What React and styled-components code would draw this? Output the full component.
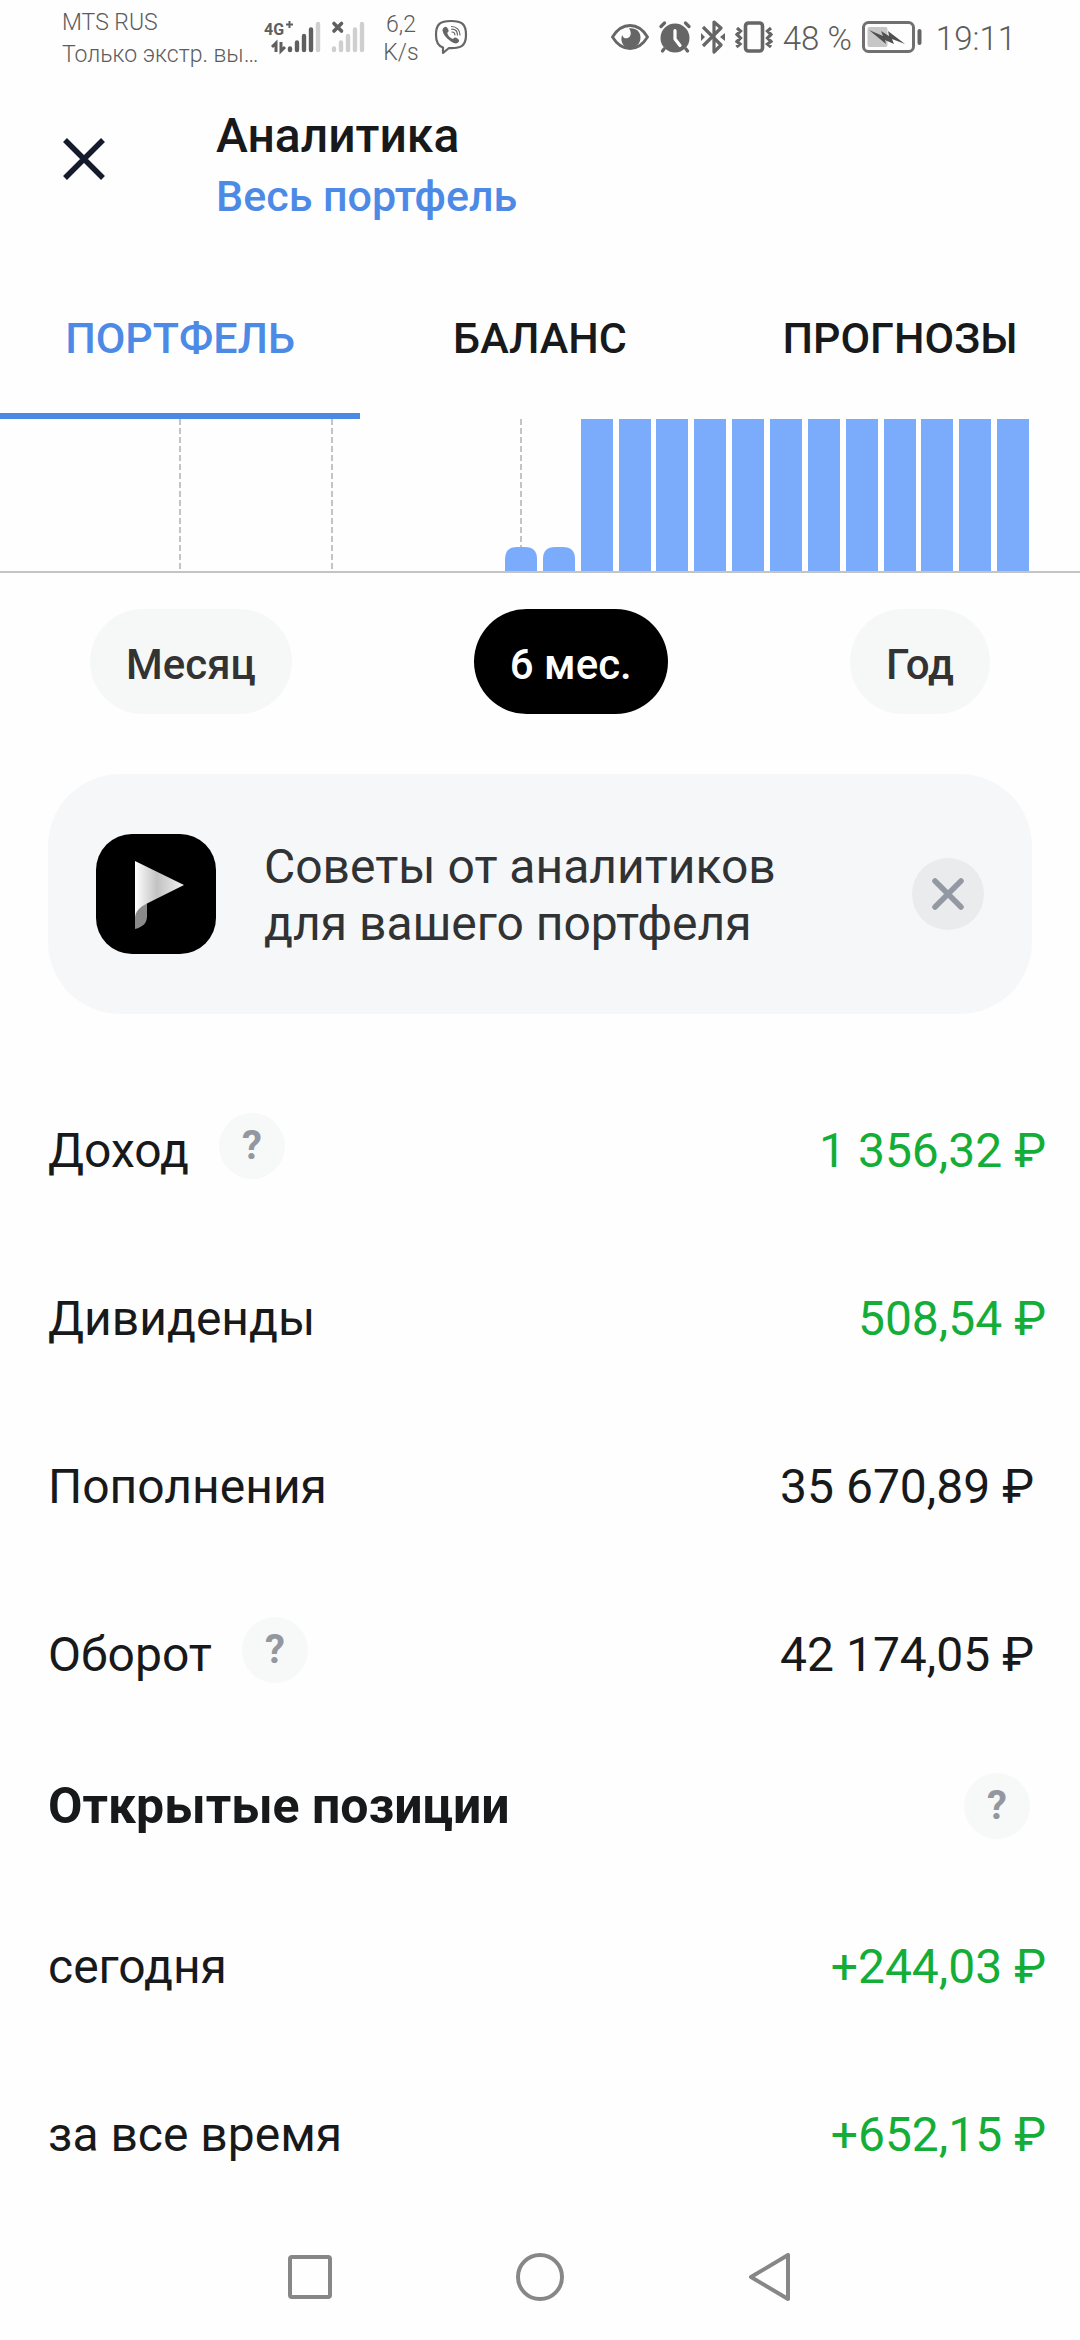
import React, { useState } from 'react'
import styled, { createGlobalStyle } from 'styled-components'

const tabs = ["ПОРТФЕЛЬ", "БАЛАНС", "ПРОГНОЗЫ"]
const periods = ["Месяц", "6 мес.", "Год"]
const totals = [
    { label: "Доход", value: "1 356,32 ₽", profit: true, help: true },
    { label: "Дивиденды", value: "508,54 ₽", profit: true },
    { label: "Пополнения", value: "35 670,89 ₽" },
    { label: "Оборот", value: "42 174,05 ₽", help: true },
]
const positions = [
    { label: "сегодня", value: "+244,03 ₽", profit: true },
    { label: "за все время", value: "+652,15 ₽", profit: true },
]
const bars = [24, 24, 152, 152, 152, 152, 152, 152, 152, 152, 152, 152, 152, 152]
const gridLines = [180, 332, 521]

const SignalIcons = () => (
    <svg width="106" height="38" viewBox="262 18 106 38" aria-hidden="true">
        <text x="264" y="35" fill="#5f5f5f" fontFamily="Roboto, sans-serif" fontWeight="700" fontSize="16">4G</text>
        <path d="M289.500 21v7M286 24.500h7" stroke="#5f5f5f" strokeWidth="2" />
        <path d="M276 52V43l-4 4M281 42v9l4-4" fill="none" stroke="#5f5f5f" strokeWidth="3" />
        <g stroke="#5f5f5f" strokeWidth="4.4" strokeLinecap="round">
            <path d="M290 48.5v1.5M297 42.5v7.5M304 36v14M311 29.5v20.5" />
            <path d="M318 24v26M334 48.5v1.5M341 42.5v7.5M348 36v14M355 29.5v20.5M362 24v26" stroke="#cfcfcf" />
        </g>
        <path d="M334 23.5l7.5 7.5M341.5 23.5l-7.5 7.5" stroke="#5f5f5f" strokeWidth="3.6" strokeLinecap="round" />
    </svg>
)

const ViberIcon = () => (
    <svg width="34" height="36" viewBox="0 0 34 36" aria-hidden="true">
        <path d="M17 2C6 2 2 5 2 16c0 7 2 11 7 12.5V34l6-5c12 .5 17-2 17-13C32 5 28 2 17 2z" fill="none" stroke="#666" strokeWidth="2.2" strokeLinejoin="round" />
        <path d="M9.500 9c2-2 3-1.500 4.500 1 1.200 2 .6 2.700-.8 4 .8 3 2.800 5 5.800 6 1.300-1.600 2.300-2 4-.8 2.700 1.700 2.700 2.800.8 4.500-1.700 1.500-4 .6-7.800-2C11.500 18.500 9 15 8.500 11.500c0-1 .2-1.700 1-2.500z" fill="#666" />
        <path d="M17.500 7.500c5 0 8.500 3.500 8.500 8.500M17.700 10.200c3.600 0 5.700 2.200 5.800 5.800M18 13c1.800 0 2.800 1 2.900 2.800" fill="none" stroke="#666" strokeWidth="1.2" strokeLinecap="round" />
    </svg>
)

const EyeIcon = () => (
    <svg width="38" height="26" viewBox="0 0 38 26" aria-hidden="true">
        <path d="M1.500 13C6 5.500 12 1.500 19 1.500S32 5.500 36.500 13C32 20.500 26 24.500 19 24.500S6 20.500 1.500 13z" fill="none" stroke="#666" strokeWidth="2.8" />
        <path d="M18 4.500c3 3.500 2 9-2 9.800-2.500.4-4-1-4.800-3.300C8.500 18 13 24 19 24s10.500-4.600 10.500-10.500S24.800 3.500 18 4.500z" fill="#666" />
    </svg>
)

const AlarmIcon = () => (
    <svg width="32" height="32" viewBox="0 0 32 32" aria-hidden="true">
        <circle cx="16" cy="17" r="14.5" fill="#666" />
        <path d="M2 5.500L5.500 2M30 5.500L26.500 2M5 28l-1.500 2M27 28l1.500 2" stroke="#666" strokeWidth="3.2" strokeLinecap="round" />
        <path d="M16 9.500V18l5 6.500" fill="none" stroke="#fff" strokeWidth="3.2" strokeLinecap="round" strokeLinejoin="round" />
    </svg>
)

const BluetoothIcon = () => (
    <svg width="24" height="34" viewBox="0 0 24 34" aria-hidden="true">
        <path d="M2 7l18 18-7 7V2l7 6L2 26" fill="none" stroke="#666" strokeWidth="3.2" strokeLinejoin="round" />
        <path d="M0 13l4 4-4 4zM24 13l-5 4 5 4z" fill="#666" />
    </svg>
)

const VibrateIcon = () => (
    <svg width="38" height="32" viewBox="0 0 38 32" aria-hidden="true">
        <rect x="10.5" y="2" width="17" height="28" rx="3" fill="none" stroke="#666" strokeWidth="3.6" />
        <path d="M2 7l3.500 3L2 13.500 5.500 17 2 20.500 5 23l-3.500 3M36 7l-3.500 3 3.500 3.500-3.500 3.500 3.500 3.500-3.500 2.500 3.500 3" fill="none" stroke="#666" strokeWidth="3.2" />
    </svg>
)

const BatteryIcon = () => (
    <svg width="60" height="32" viewBox="0 0 60 32" aria-hidden="true">
        <rect x="1.5" y="1.5" width="50" height="29" rx="5" fill="none" stroke="#707070" strokeWidth="3" />
        <rect x="5.5" y="6" width="20" height="20" rx="2" fill="#c6c6c6" />
        <path d="M7 9l14 6-2-5 8 5-1-5 17 13-13-5 2 5-9-4 1 4z" fill="#505050" />
        <rect x="55.5" y="8" width="4" height="16" rx="2" fill="#666" />
    </svg>
)

const AppLogo = () => (
    <svg width="120" height="120" viewBox="0 0 120 120" aria-hidden="true">
        <defs>
            <linearGradient id="sail" x1="0" x2="1" y1="0" y2="0">
                <stop offset="0" stopColor="#fff" />
                <stop offset="0.45" stopColor="#c2c2c2" />
                <stop offset="1" stopColor="#f2f2f2" />
            </linearGradient>
        </defs>
        <rect width="120" height="120" rx="36" fill="#000" />
        <path d="M39 95V82c0-5 4-9 12-13v13c0 7-4 11-12 13z" fill="#8a8a8a" />
        <path d="M39 27l49 24-36 18c-8 4-13 8-13 16z" fill="url(#sail)" />
    </svg>
)

const Chart = () => (
    <ChartSvg viewBox="0 0 1080 154" role="img" aria-label="Портфель">
        {gridLines.map((x) => (
            <path key={x} d={`M${x} 0V152`} stroke="#c4c4c4" strokeWidth="2" strokeDasharray="6 3" />
        ))}
        {bars.map((h, i) => {
            const x = Math.round(505 + i * 37.85)
            return h < 152
                ? <path key={i} d={`M${x} 152v-12q0-12 12-12h8q12 0 12 12v12z`} fill="#7bacfb" />
                : <rect key={i} x={x} y="0" width="32" height={h} fill="#7bacfb" />
        })}
        <rect y="152" width="1080" height="2" fill="#c4c4c4" />
    </ChartSvg>
)

const Rows = ({ items }) => (
    <List>
        {items.map(({ label, value, profit, help }) => (
            <Row key={label}>
                <Label>
                    {label}
                    {help && <RowHelp type="button">?</RowHelp>}
                </Label>
                <Amount $profit={profit}>{value}</Amount>
            </Row>
        ))}
    </List>
)

const App = () => {
    const [tab, setTab] = useState("ПОРТФЕЛЬ")
    const [period, setPeriod] = useState("6 мес.")
    const [showTips, setShowTips] = useState(true)

    return (
        <Page>
            <GlobalStyle />
            <StatusBar>
                <Carrier>
                    <span>MTS RUS</span>
                    <span>Только экстр. вы…</span>
                </Carrier>
                <SignalIcons />
                <Speed>
                    <span>6,2</span>
                    <span>K/s</span>
                </Speed>
                <ViberIcon />
                <StatusRight>
                    <EyeIcon />
                    <AlarmIcon />
                    <BluetoothIcon />
                    <VibrateIcon />
                    <StatusText>48 %</StatusText>
                    <BatteryIcon />
                    <StatusText $clock>19:11</StatusText>
                </StatusRight>
            </StatusBar>
            <Header>
                <CloseButton type="button" aria-label="Закрыть">
                    <svg width="44" height="44" viewBox="0 0 44 44" aria-hidden="true">
                        <path d="M3 3l38 38M41 3L3 41" stroke="#161b2b" strokeWidth="5.5" />
                    </svg>
                </CloseButton>
                <div>
                    <Title>Аналитика</Title>
                    <PortfolioLink href="#portfolio">Весь портфель</PortfolioLink>
                </div>
            </Header>
            <Tabs role="tablist">
                {tabs.map((name) => (
                    <Tab key={name} type="button" role="tab" aria-selected={tab === name} $active={tab === name} onClick={() => setTab(name)}>{name}</Tab>
                ))}
            </Tabs>
            <Chart />
            <Periods>
                {periods.map((name) => (
                    <Period key={name} type="button" $active={period === name} onClick={() => setPeriod(name)}>{name}</Period>
                ))}
            </Periods>
            {showTips && (
                <Tips>
                    <AppLogo />
                    <TipsText>Советы от аналитиков<br />для вашего портфеля</TipsText>
                    <DismissButton type="button" aria-label="Скрыть" onClick={() => setShowTips(false)}>
                        <svg width="32" height="32" viewBox="0 0 32 32" aria-hidden="true">
                            <path d="M3 3l26 26M29 3L3 29" stroke="#9299a2" strokeWidth="5.5" strokeLinecap="round" />
                        </svg>
                    </DismissButton>
                </Tips>
            )}
            <Rows items={totals} />
            <SectionHeader>
                <SectionTitle>Открытые позиции</SectionTitle>
                <Help type="button">?</Help>
            </SectionHeader>
            <Rows items={positions} />
            <NavBar>
                <NavButton type="button" aria-label="Недавние">
                    <svg width="48" height="48" viewBox="0 0 48 48"><rect x="4" y="4" width="40" height="40" rx="2" /></svg>
                </NavButton>
                <NavButton type="button" aria-label="Домой">
                    <svg width="48" height="48" viewBox="0 0 48 48"><circle cx="24" cy="24" r="22" /></svg>
                </NavButton>
                <NavButton type="button" aria-label="Назад">
                    <svg width="48" height="48" viewBox="0 0 48 48"><path d="M42 2v44L5 24z" /></svg>
                </NavButton>
            </NavBar>
        </Page>
    )
}

export default App

const GlobalStyle = createGlobalStyle`
    * {
        box-sizing: border-box;
    }
    body {
        margin: 0;
        background: #fefefe;
        font-family: Roboto, "Noto Sans", sans-serif;
        color: #18191a;
    }
    button {
        border: none;
        padding: 0;
        background: none;
        font-family: inherit;
        color: inherit;
        cursor: pointer;
    }
    svg {
        display: block;
        flex-shrink: 0;
    }
`
const Page = styled.main`
    display: flex;
    flex-direction: column;
    min-height: 100vh;
`
const StatusBar = styled.div`
    display: flex;
    align-items: center;
    height: 74px;
    padding: 0 64px 0 62px;
    color: #5c5c5c;
    font-weight: 300;
`
const Carrier = styled.div`
    display: flex;
    flex-direction: column;
    width: 200px;
    padding-top: 4px;
    font-size: 23px;
    line-height: 32px;
    white-space: nowrap;
`
const Speed = styled.div`
    display: flex;
    flex-direction: column;
    width: 66px;
    padding-top: 4px;
    font-size: 23px;
    line-height: 28px;
    text-align: center;
`
const StatusRight = styled.div`
    display: flex;
    align-items: center;
    gap: 10px;
    margin-left: auto;
`
const StatusText = styled.span`
    padding-top: 4px;
    padding-left: ${(props) => (props.$clock ? "4px" : "0")};
    font-size: 33px;
    line-height: 40px;
    white-space: nowrap;
`
const Header = styled.header`
    display: flex;
    gap: 96px;
    height: 189px;
    padding: 32px 48px 0;
`
const CloseButton = styled.button`
    display: flex;
    align-items: center;
    justify-content: center;
    width: 72px;
    height: 106px;
`
const Title = styled.h1`
    margin: 0;
    font-size: 48px;
    font-weight: 500;
    line-height: 60px;
`
const PortfolioLink = styled.a`
    display: block;
    font-size: 43px;
    font-weight: 500;
    line-height: 60px;
    color: #4d8ae6;
    text-decoration: none;
`
const Tabs = styled.div`
    display: grid;
    grid-template-columns: repeat(3, 1fr);
`
const Tab = styled.button`
    height: 156px;
    border-bottom: 6px solid ${(props) => (props.$active ? "#4a89e6" : "transparent")};
    font-size: 43px;
    font-weight: 500;
    color: ${(props) => (props.$active ? "#4d8ae6" : "#18191a")};
`
const ChartSvg = styled.svg`
    width: 100%;
    height: auto;
`
const Periods = styled.div`
    display: flex;
    justify-content: space-between;
    padding: 36px 90px 60px;
`
const Period = styled.button`
    height: 105px;
    padding: 6px 36px 0;
    border-radius: 53px;
    background: ${(props) => (props.$active ? "#000" : "#f6f8f8")};
    color: ${(props) => (props.$active ? "#fff" : "#333")};
    font-size: 42px;
    font-weight: 500;
`
const Tips = styled.section`
    display: flex;
    align-items: center;
    gap: 48px;
    height: 240px;
    margin: 0 48px;
    padding: 0 48px;
    border-radius: 72px;
    background: #f5f7f9;
`
const TipsText = styled.p`
    flex: 1;
    margin: 0;
    padding-top: 2px;
    font-size: 48px;
    line-height: 57px;
    color: #303234;
`
const DismissButton = styled.button`
    display: flex;
    align-items: center;
    justify-content: center;
    width: 72px;
    height: 72px;
    border-radius: 50%;
    background: #e9ebed;
`
const List = styled.dl`
    margin: 0;
    &:first-of-type {
        margin-top: 52px;
    }
`
const Row = styled.div`
    display: flex;
    align-items: center;
    justify-content: space-between;
    height: 168px;
    padding: 0 34px 0 48px;
    font-size: 48px;
`
const Label = styled.dt`
    display: flex;
    align-items: center;
    gap: 30px;
`
const Amount = styled.dd`
    margin: 0;
    padding-right: ${(props) => (props.$profit ? "0" : "12px")};
    color: ${(props) => (props.$profit ? "#14ad38" : "#18191a")};
    white-space: nowrap;
`
const Help = styled.button`
    width: 66px;
    height: 66px;
    border-radius: 50%;
    background: #f7f8f8;
    color: #9397a0;
    font-size: 40px;
    font-weight: 700;
    line-height: 66px;
`
const RowHelp = styled(Help)`
    margin-bottom: 8px;
`
const SectionHeader = styled.div`
    display: flex;
    align-items: center;
    justify-content: space-between;
    height: 136px;
    margin-bottom: 8px;
    padding: 0 50px 0 48px;
`
const SectionTitle = styled.h2`
    margin: 0;
    font-size: 50px;
    font-weight: 700;
`
const NavBar = styled.nav`
    display: flex;
    align-items: center;
    justify-content: center;
    gap: 182px;
    height: 118px;
`
const NavButton = styled.button`
    svg {
        fill: none;
        stroke: #878787;
        stroke-width: 4px;
        stroke-linejoin: round;
    }
`
